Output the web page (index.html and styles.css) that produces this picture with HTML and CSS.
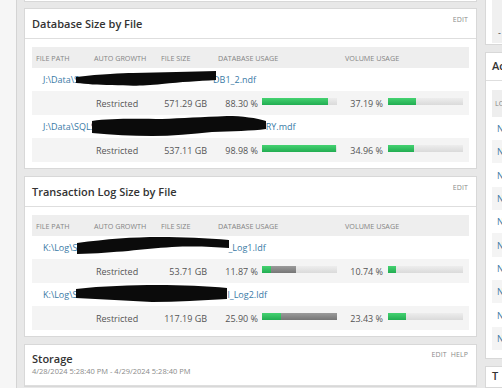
FILE: index.html
```html
<!DOCTYPE html>
<html>
<head>
<meta charset="utf-8">
<link rel="stylesheet" href="styles.css">
</head>
<body>
<div class="page">
  <aside class="rail"></aside>
  <main class="main">
    <section class="col col-l">
      <div class="card tail"></div>

      <div class="card">
        <header class="head">
          <h2 class="title">Database Size by File</h2>
          <div class="acts"><a class="act">EDIT</a></div>
        </header>
        <div class="tbl">
          <div class="tr th">
            <span>File Path</span><span>Auto Growth</span><span>File Size</span><span>Database Usage</span><span>Volume Usage</span>
          </div>
          <div class="tr path">
            <a class="link">J:\Data\S<span class="gap gap-a"></span>DB1_2.ndf</a>
            <svg class="redact" width="437" height="23" viewBox="0 0 437 23"><path d="M44,9 C70,6 90,5 101,5 C130,4 160,4 184,3 L184,12 C165,13 150,14 130,16 C110,18 100,18 80,17 C65,17 55,16 44,15 Z"/></svg>
          </div>
          <div class="tr data">
            <span></span><span class="ag">Restricted</span><span class="fs">571.29 GB</span>
            <div class="use use-db"><span class="pct">88.30 %</span><div class="bar"><i class="g" style="width:88.30%"></i></div></div>
            <div class="use use-vol"><span class="pct">37.19 %</span><div class="bar"><i class="g" style="width:37.19%"></i></div></div>
          </div>
          <div class="tr path">
            <a class="link">J:\Data\SQLS<span class="gap gap-b"></span>RY.mdf</a>
            <svg class="redact" width="437" height="23" viewBox="0 0 437 23"><path d="M60,6 C80,3 110,4 130,4 C150,3 170,2 195,1 C210,1 225,3 234,6 L234,14 C220,16 200,16 180,17 C160,19 140,21 120,21 C100,21 80,20 60,18 Z"/></svg>
          </div>
          <div class="tr data">
            <span></span><span class="ag">Restricted</span><span class="fs">537.11 GB</span>
            <div class="use use-db"><span class="pct">98.98 %</span><div class="bar"><i class="g" style="width:98.98%"></i></div></div>
            <div class="use use-vol"><span class="pct">34.96 %</span><div class="bar"><i class="g" style="width:34.96%"></i></div></div>
          </div>
        </div>
      </div>

      <div class="card">
        <header class="head">
          <h2 class="title">Transaction Log Size by File</h2>
          <div class="acts"><a class="act">EDIT</a></div>
        </header>
        <div class="tbl">
          <div class="tr th">
            <span>File Path</span><span>Auto Growth</span><span>File Size</span><span>Database Usage</span><span>Volume Usage</span>
          </div>
          <div class="tr path">
            <a class="link">K:\Log\S<span class="gap gap-c"></span>_Log1.ldf</a>
            <svg class="redact" width="437" height="23" viewBox="0 0 437 23"><path d="M45,7 C75,3 100,1 128,1 C150,1 175,2 197,4 L197,12 C180,11 165,10 140,11 C110,13 85,17 45,18 Z"/></svg>
          </div>
          <div class="tr data">
            <span></span><span class="ag">Restricted</span><span class="fs">53.71 GB</span>
            <div class="use use-db"><span class="pct">11.87 %</span><div class="bar"><i class="g" style="width:11.87%"></i><i class="k" style="width:33.13%"></i></div></div>
            <div class="use use-vol"><span class="pct">10.74 %</span><div class="bar"><i class="g" style="width:10.74%"></i></div></div>
          </div>
          <div class="tr path">
            <a class="link">K:\Log\S<span class="gap gap-d"></span>l_Log2.ldf</a>
            <svg class="redact" width="437" height="23" viewBox="0 0 437 23"><path d="M44,6 C70,3 100,2 125,2 C150,2 175,3 195,5 L195,16 C170,17 145,19 120,19 C95,18 70,16 44,15 Z"/></svg>
          </div>
          <div class="tr data">
            <span></span><span class="ag">Restricted</span><span class="fs">117.19 GB</span>
            <div class="use use-db"><span class="pct">25.90 %</span><div class="bar"><i class="g" style="width:25.90%"></i><i class="k" style="width:74.10%"></i></div></div>
            <div class="use use-vol"><span class="pct">23.43 %</span><div class="bar"><i class="g" style="width:23.43%"></i></div></div>
          </div>
        </div>
      </div>

      <div class="card">
        <header class="head head-sub">
          <div class="titles">
            <h2 class="title">Storage</h2>
            <div class="sub">4/28/2024 5:28:40 PM - 4/29/2024 5:28:40 PM</div>
          </div>
          <div class="acts acts-sub"><a class="act">EDIT</a><a class="act">HELP</a></div>
        </header>
      </div>
    </section>

    <section class="col col-r">
      <div class="card tail-r">
        <div class="inner-box"><span class="dash">-</span></div>
      </div>
      <div class="card">
        <header class="head head-r">
          <h2 class="title">Ac</h2>
        </header>
        <div class="rtbl">
          <div class="rth">Lo</div>
          <div class="rtr"><a class="link">N</a></div>
          <div class="rtr alt"><a class="link">N</a></div>
          <div class="rtr"><a class="link">N</a></div>
          <div class="rtr alt"><a class="link">N</a></div>
          <div class="rtr"><a class="link">N</a></div>
          <div class="rtr alt"><a class="link">N</a></div>
          <div class="rtr"><a class="link">N</a></div>
          <div class="rtr alt"><a class="link">N</a></div>
          <div class="rtr"><a class="link">N</a></div>
          <div class="rtr alt"><a class="link">N</a></div>
        </div>
      </div>
      <div class="card">
        <header class="head head-r2">
          <h2 class="title">T</h2>
        </header>
      </div>
    </section>
  </main>
</div>
</body>
</html>
```
FILE: styles.css
```css
* { box-sizing: border-box; }
html, body {
  margin: 0;
  width: 502px;
  height: 388px;
  overflow: hidden;
  background: #e8e8e8;
  font-family: "Open Sans", "Noto Sans", sans-serif;
  color: #555;
}
.page { display: flex; height: 388px; }
.rail {
  flex: none;
  width: 17px;
  background: #f6f6f6;
  border-right: 1px solid #d4d4d4;
}
.main { display: flex; gap: 8px; padding-left: 7px; }
.col { display: flex; flex-direction: column; gap: 7px; flex: none; }
.col-l { width: 453px; }
.col-r { width: 220px; }

.card { background: #fff; border: 1px solid #d8d8d8; }
.tail { height: 2px; border-top: none; margin-bottom: -1px; }

.head {
  height: 30px;
  display: flex;
  align-items: center;
  justify-content: space-between;
  padding: 0 8px 0 7px;
  border-bottom: 1px solid #dedede;
}
.title {
  margin: 0;
  font-size: 11px;
  line-height: 14px;
  font-weight: 600;
  color: #333;
}
.acts { align-self: flex-start; margin-top: 6px; display: flex; gap: 4px; }
.act {
  font-size: 7px;
  line-height: 10px;
  color: #8a8a8a;
  letter-spacing: 0.1px;
}

.tbl { margin: 8px 7px 6px; }
.tr {
  display: grid;
  grid-template-columns: 58px 67px 57px 127px 128px;
  align-items: center;
  position: relative;
}
.th {
  height: 21px;
  background: #eeeeee;
  font-size: 7.2px;
  text-transform: uppercase;
  color: #858585;
}
.th span { padding-left: 4px; white-space: nowrap; }
.path { height: 23px; }
.path .link { grid-column: 1 / -1; padding-left: 11px; }
.link {
  font-size: 9px;
  color: #3a7aa6;
  white-space: nowrap;
  text-decoration: none;
}
.gap { display: inline-block; }
.gap-a { width: 134px; }
.gap-b { width: 170px; }
.gap-c { width: 151px; }
.gap-d { width: 150px; }
.redact {
  position: absolute;
  left: 0;
  top: 0;
  overflow: visible;
  fill: #0b0b0b;
}
.data {
  height: 24px;
  background: #f4f4f4;
  font-size: 9px;
  color: #555;
}
.ag { padding-left: 6px; }
.fs { text-align: right; padding-right: 7px; }
.use { display: flex; align-items: center; }
.use-db .pct { width: 44px; margin-right: 4px; }
.use-vol .pct { width: 42px; margin-right: 5px; }
.pct { text-align: right; white-space: nowrap; }
.bar {
  width: 75px;
  height: 7px;
  display: flex;
  margin-top: -3px;
  background: linear-gradient(#ededed, #dadada);
}
.bar i { display: block; height: 100%; }
.bar .g { background: linear-gradient(#45d271, #22ad52); }
.bar .k { background: linear-gradient(#9b9b9b, #767676); }

.head-sub { height: 41px; align-items: flex-start; padding-top: 7px; }
.acts-sub { margin-top: -2px; }
.sub { font-size: 7.5px; line-height: 10px; color: #8a8a8a; white-space: nowrap; }

/* right column */
.tail-r { height: 53px; border-top: none; padding: 0 0 0 6px; }
.inner-box {
  height: 43px;
  background: #f0f0f0;
  display: flex;
  align-items: flex-end;
  padding: 0 0 4px 6px;
  font-size: 9px;
  color: #444;
}
.head-r { height: 28px; padding-left: 6px; }
.rtbl { margin: 9px 0 8px 6px; }
.rth {
  height: 27px;
  display: flex;
  align-items: center;
  padding-left: 3px;
  background: #eeeeee;
  font-size: 7.2px;
  text-transform: uppercase;
  color: #858585;
}
.rtr {
  height: 23.33px;
  display: flex;
  align-items: center;
  padding-left: 5px;
}
.rtr.alt { background: #f4f4f4; }
.head-r2 { height: 20px; padding-left: 6px; align-items: flex-start; padding-top: 2px; border-bottom: none; }
```
